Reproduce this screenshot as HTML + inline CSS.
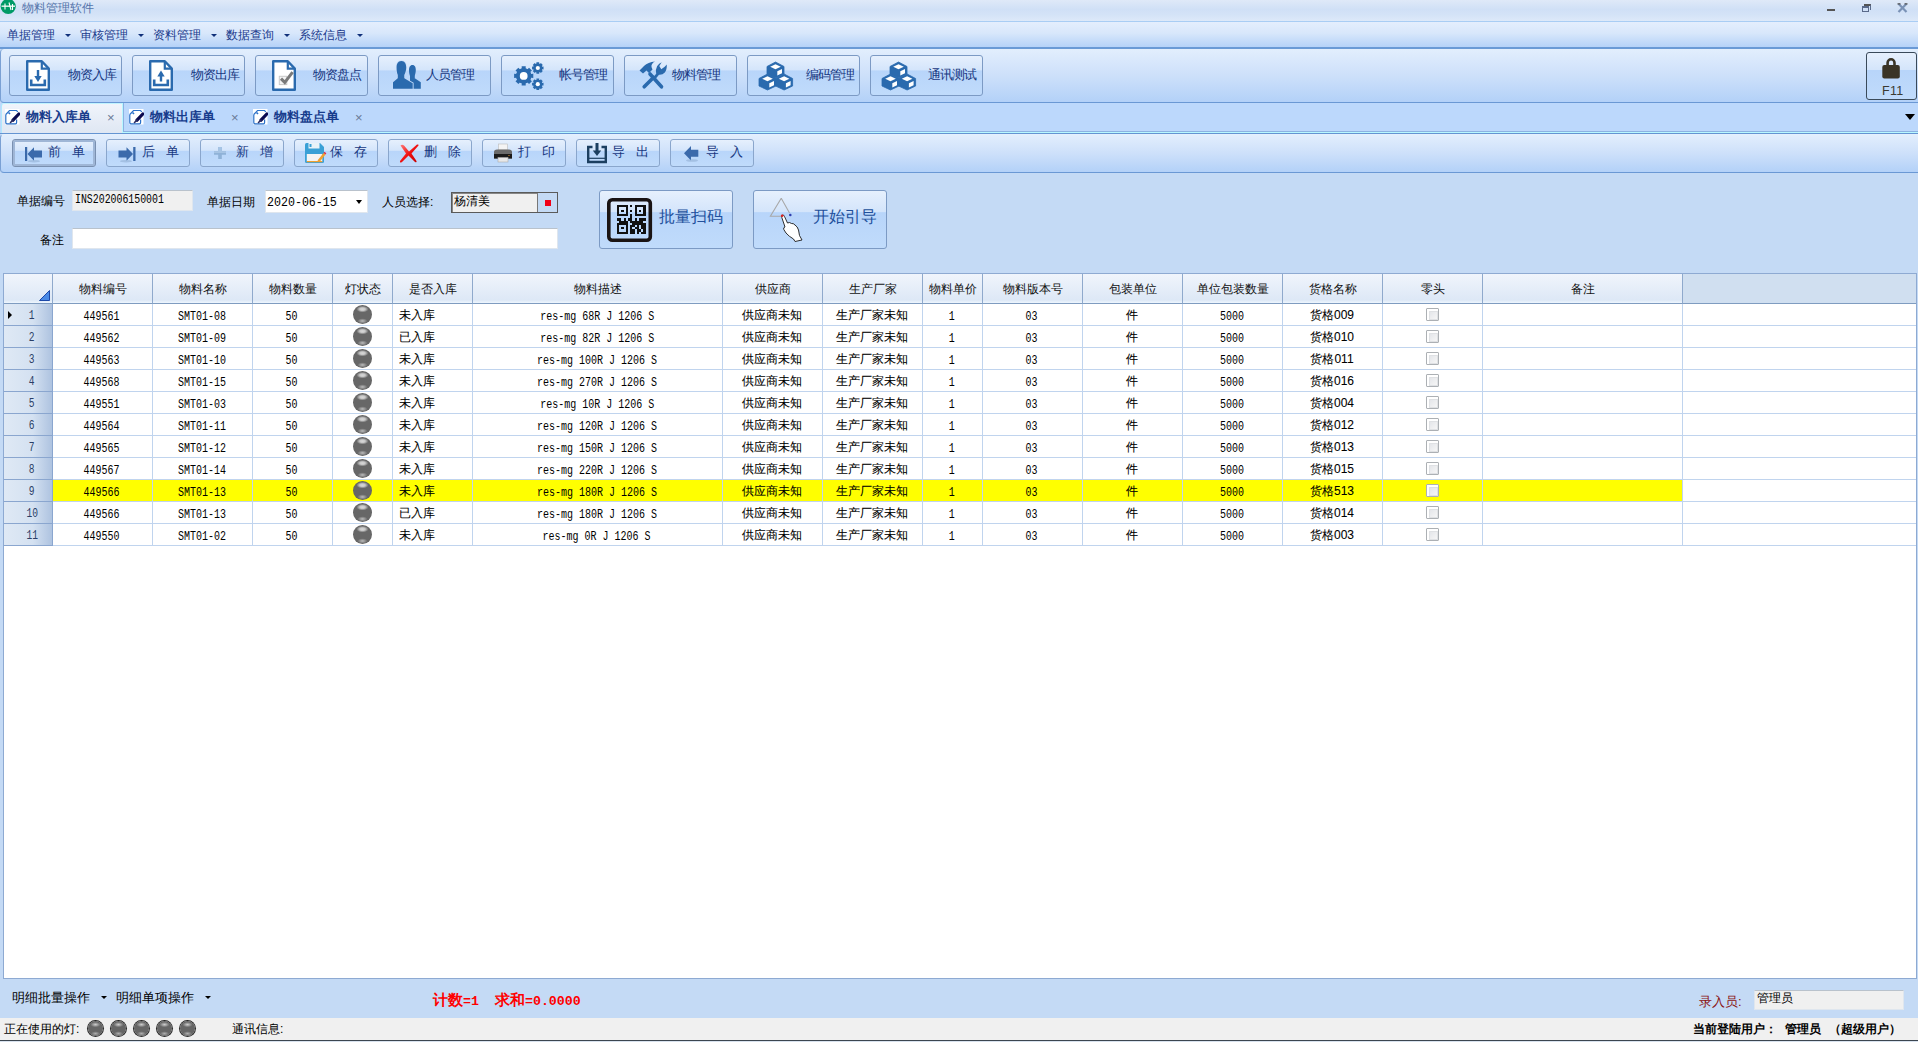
<!DOCTYPE html><html><head><meta charset="utf-8"><style>
*{margin:0;padding:0;box-sizing:border-box}
html,body{width:1918px;height:1042px;overflow:hidden;background:#c4daf5;font-family:"Liberation Sans", sans-serif;font-size:12px;color:#000}
.a{position:absolute}
.t{position:absolute;white-space:nowrap;line-height:12px}
#title{left:0;top:0;width:1918px;height:22px;background:linear-gradient(#dfe9f8,#d0e0f6 45%,#d4e3f7 70%,#dde9f9);border-bottom:1px solid #a9cdf4}
#menu{left:0;top:22px;width:1918px;height:27px;background:linear-gradient(#e4eefd,#d8e7fb 45%,#b5d2f8);border-bottom:2px solid #6a9ad6}
#tb1{left:0;top:49px;width:1918px;height:54px;background:linear-gradient(#e2eefd,#cde0fa 50%,#b3d1f8);border-bottom:1px solid #6a98d4;border-left:1px solid #7aa0d4;border-radius:4px 0 0 4px}
.b1{position:absolute;top:6px;width:113px;height:41px;border:1px solid #7c9ac4;border-radius:3px;background:linear-gradient(#e6f0fd,#d4e5fb 36%,#b8d5fa 38%,#c0dbfb)}
.b1 .t{left:59px;top:13px;color:#17377f;font-size:12px}
#tabs{left:0;top:103px;width:1918px;height:31px;background:#bcd8fc;border-bottom:1px solid #6494d2}
#tb2{left:0;top:134px;width:1918px;height:39px;background:linear-gradient(#e2eefd,#cde0fa 50%,#b3d1f8);border-bottom:1px solid #6a98d4;border-left:1px solid #7aa0d4;border-top:1px solid #e4f0fe;border-radius:4px 0 0 4px}
.b2{position:absolute;top:4px;width:84px;height:28px;border:1px solid #8aa6cc;border-radius:3px;background:linear-gradient(#e6f0fd,#d4e5fb 40%,#b8d5fa 42%,#c0dbfb)}
.b2 .t{color:#17377f;font-size:12px;top:7px}
.inp{position:absolute;background:#f0f0f0;border:1px solid #dfe6ee;border-top-color:#b9c2cc}
.bigb{position:absolute;top:190px;width:134px;height:59px;border:1px solid #7c9ac4;border-radius:3px;background:linear-gradient(#e6f0fd,#d4e5fb 36%,#b8d5fa 38%,#c0dbfb)}
#grid{left:3px;top:273px;width:1914px;height:706px;background:#fff;border:1px solid #8eaad2}
.hc{position:absolute;top:0;height:30px;background:linear-gradient(#f0f5fc,#dde8f6 90%,#eef6fe);border-right:1px solid #8fa9cc;border-bottom:1px solid #7f9cc0;text-align:center}
.hc span{position:absolute;left:0;right:0;top:9px;line-height:12px;color:#111}
.rh{position:absolute;left:0;width:49px;height:22px;background:linear-gradient(90deg,#dfe9f5,#d4e1f1 60%,#aec3e0);border-right:1px solid #8aa6cf;border-bottom:1px solid #8aa6cf}
.rh span{position:absolute;left:0;width:56px;text-align:center;top:7px;line-height:10px;font-family:'Liberation Mono', monospace;font-size:12px;color:#2a3e66}
.rh span i{font-style:normal;display:inline-block;transform:scaleX(0.8)}
.hl{position:absolute;height:1px;background:#c0d4ee}
.vl{position:absolute;width:1px;background:#c0d4ee}
.c{position:absolute;height:12px;line-height:12px;text-align:center;white-space:nowrap;-webkit-text-stroke:0.08px #000}
.c.m{-webkit-text-stroke:0}
.m{font-family:'Liberation Mono', monospace;font-size:12.5px}
.m i{font-style:normal;display:inline-block;transform:scaleX(0.8)}
.sph{position:absolute;width:19px;height:19px;border-radius:50%;background:radial-gradient(6px 3.2px at 50% 22%,#dadada,#c8c8c8 45%,rgba(150,150,150,0)),radial-gradient(5px 2.6px at 50% 84%,#bdbdbd,rgba(170,170,170,0)),radial-gradient(circle at 50% 50%,#676767 62%,#5a5a5a 85%,#444 100%)}
.cb{position:absolute;width:13px;height:13px;border:1px solid #acb0b4;border-radius:1px;background:#fff}
.cb::after{content:'';position:absolute;left:2px;top:2px;width:9px;height:9px;box-sizing:border-box;border:1px solid #dfe1e4;background:linear-gradient(135deg,#e4e6ea,#f6f6f6)}
#bottom{left:0;top:979px;width:1918px;height:39px;background:#c4daf5}
#status{left:0;top:1018px;width:1918px;height:24px;background:#f0f0f0;border-bottom:1px solid #d8e2ee}
#sline{left:0;top:1040px;width:1918px;height:1px;background:#3c4650}
.lamp{position:absolute;top:3px;width:15px;height:15px;border-radius:50%;background:radial-gradient(5px 2.6px at 50% 24%,#cfcfcf,rgba(160,160,160,0)),radial-gradient(4.5px 2.3px at 50% 84%,#b0b0b0,rgba(160,160,160,0)),radial-gradient(circle,#666 60%,#555 85%,#333);box-shadow:0 0 0 1px #2a2a2a}
</style></head><body><div id="title" class="a">
<svg class="a" style="left:0;top:-1px" width="17" height="17" viewBox="0 0 17 17"><circle cx="8.2" cy="7.5" r="7.6" fill="#009a66"/><path d="M1.5 7.2 H15" stroke="#e8f4ee" stroke-width="1.4"/><path d="M5 4.5 V10.5 M9 3.5 L11 11 M12.5 5 V11" stroke="#fff" stroke-width="1.1"/></svg>
<div class="t" style="left:22px;top:2px;color:#5574aa;font-size:12px;line-height:12px">物料管理软件</div>
<div class="a" style="left:1827px;top:9px;width:8px;height:2px;background:#555"></div>
<div class="a" style="left:1862px;top:6px;width:7px;height:6px;border:1px solid #5a6a8a;border-top-width:2px"></div><div class="a" style="left:1864px;top:4px;width:7px;height:6px;border-top:2px solid #555;border-right:1px solid #5a6a8a"></div>
<svg class="a" style="left:1897px;top:3px" width="11" height="10" viewBox="0 0 11 10"><path d="M1.5 0.8 L9.5 9 M9.5 0.8 L1.5 9" stroke="#7a92b6" stroke-width="2.2"/><path d="M0.5 0.8 H3.5 M7.5 0.8 H10.5" stroke="#555" stroke-width="1.2"/></svg>
</div>
<div id="menu" class="a">
<div class="t" style="left:7px;top:7px;color:#1a3a8c">单据管理</div>
<div class="a" style="left:65px;top:12px;width:0;height:0;border-left:3px solid transparent;border-right:3px solid transparent;border-top:3px solid #10307a"></div>
<div class="t" style="left:80px;top:7px;color:#1a3a8c">审核管理</div>
<div class="a" style="left:138px;top:12px;width:0;height:0;border-left:3px solid transparent;border-right:3px solid transparent;border-top:3px solid #10307a"></div>
<div class="t" style="left:153px;top:7px;color:#1a3a8c">资料管理</div>
<div class="a" style="left:211px;top:12px;width:0;height:0;border-left:3px solid transparent;border-right:3px solid transparent;border-top:3px solid #10307a"></div>
<div class="t" style="left:226px;top:7px;color:#1a3a8c">数据查询</div>
<div class="a" style="left:284px;top:12px;width:0;height:0;border-left:3px solid transparent;border-right:3px solid transparent;border-top:3px solid #10307a"></div>
<div class="t" style="left:299px;top:7px;color:#1a3a8c">系统信息</div>
<div class="a" style="left:357px;top:12px;width:0;height:0;border-left:3px solid transparent;border-right:3px solid transparent;border-top:3px solid #10307a"></div>
</div>
<div id="tb1" class="a">
<div class="b1" style="left:8px"><svg class="a" style="left:16px;top:4px;overflow:visible" width="24" height="31" viewBox="0 0 24 31"><path d="M1.2 1.2 H15.8 L22.8 8.6 V29.8 H1.2 Z" fill="#fff" stroke="#2a6aae" stroke-width="2.4" stroke-linejoin="round"/><path d="M15.8 1.2 V8.6 H22.8" fill="none" stroke="#2a6aae" stroke-width="2.2"/><path d="M5.2 19.5 V25 H18.8 V19.5" fill="none" stroke="#2a6aae" stroke-width="2.6"/><path d="M12 10 V18" stroke="#2a6aae" stroke-width="2.4"/><path d="M8.3 16 L12 22 L15.7 16 Z" fill="#2a6aae"/></svg><div class="t" style="left:58px;top:12px;font-size:13px;letter-spacing:-1px;line-height:14px">物资入库</div></div>
<div class="b1" style="left:131px"><svg class="a" style="left:16px;top:4px;overflow:visible" width="24" height="31" viewBox="0 0 24 31"><path d="M1.2 1.2 H15.8 L22.8 8.6 V29.8 H1.2 Z" fill="#fff" stroke="#2a6aae" stroke-width="2.4" stroke-linejoin="round"/><path d="M15.8 1.2 V8.6 H22.8" fill="none" stroke="#2a6aae" stroke-width="2.2"/><path d="M5.2 19.5 V25 H18.8 V19.5" fill="none" stroke="#2a6aae" stroke-width="2.6"/><path d="M12 15 V21.5" stroke="#2a6aae" stroke-width="2.4"/><path d="M8.3 16.5 L12 10.5 L15.7 16.5 Z" fill="#2a6aae"/></svg><div class="t" style="left:58px;top:12px;font-size:13px;letter-spacing:-1px;line-height:14px">物资出库</div></div>
<div class="b1" style="left:254px"><svg class="a" style="left:16px;top:4px;overflow:visible" width="24" height="31" viewBox="0 0 24 31"><path d="M1.2 1.2 H15.8 L22.8 8.6 V29.8 H1.2 Z" fill="#fff" stroke="#2a6aae" stroke-width="2.4" stroke-linejoin="round"/><path d="M15.8 1.2 V8.6 H22.8" fill="none" stroke="#2a6aae" stroke-width="2.2"/><rect x="7.3" y="16.3" width="7.5" height="8.3" fill="#f4f4f4" stroke="#c8c8c8" stroke-width="1"/><path d="M9 18.6 L12.8 22.4 L20.6 12.2" fill="none" stroke="#7a7a7a" stroke-width="3"/></svg><div class="t" style="left:57px;top:12px;font-size:13px;letter-spacing:-1px;line-height:14px">物资盘点</div></div>
<div class="b1" style="left:377px"><svg class="a" style="left:14px;top:5px;overflow:visible" width="28" height="28" viewBox="0 0 28 28"><path d="M19.4 4 C22 4 22.8 6.5 22.8 9 C22.8 12 22 13.5 21.8 15 V18 H17 V15 C16.5 13.5 16 12 16 9 C16 6.5 17 4 19.4 4 Z" fill="#2a6aae"/><path d="M17 17.5 H22.2 L27.8 21.3 V27.7 H17 Z" fill="#2a6aae"/><path d="M4.8 17.3 L0 21.3 V27.7 H19.7 V22.3 L11.3 17.3 Z" fill="#2a6aae" stroke="#c2dafa" stroke-width="1.8"/><path d="M8.4 0 C12 0 13.2 3 13.2 6.5 C13.2 10 12.2 12 11.3 14 L11.3 18 L4.8 18 L4.8 14 C4 12 3.6 10 3.6 6.5 C3.6 3 4.8 0 8.4 0 Z" fill="#2a6aae" stroke="#c8defa" stroke-width="1.4"/><path d="M4.8 17.3 L0 21.3 V27.7 H19.7 V22.3 L11.3 17.3 Z" fill="#2a6aae"/><path d="M8.4 0 C12 0 13.2 3 13.2 6.5 C13.2 10 12.2 12 11.3 14 L11.3 18 L4.8 18 L4.8 14 C4 12 3.6 10 3.6 6.5 C3.6 3 4.8 0 8.4 0 Z" fill="#2a6aae"/></svg><div class="t" style="left:47px;top:12px;font-size:13px;letter-spacing:-1px;line-height:14px">人员管理</div></div>
<div class="b1" style="left:500px"><svg class="a" style="left:12px;top:6px;overflow:visible" width="31" height="29" viewBox="0 0 31 29"><path d="M17.04 11.94 L19.28 11.86 L19.28 15.94 L17.04 15.86 L16.28 17.71 L17.92 19.23 L15.03 22.12 L13.51 20.48 L11.66 21.24 L11.74 23.48 L7.66 23.48 L7.74 21.24 L5.89 20.48 L4.37 22.12 L1.48 19.23 L3.12 17.71 L2.36 15.86 L0.12 15.94 L0.12 11.86 L2.36 11.94 L3.12 10.09 L1.48 8.57 L4.37 5.68 L5.89 7.32 L7.74 6.56 L7.66 4.32 L11.74 4.32 L11.66 6.56 L13.51 7.32 L15.03 5.68 L17.92 8.57 L16.28 10.09Z" fill="#2a6aae"/><circle cx="9.7" cy="13.9" r="7.6" fill="#2a6aae"/><circle cx="9.7" cy="13.9" r="3.9" fill="#fff"/><path d="M28.10 4.68 L29.53 4.60 L29.53 7.40 L28.10 7.32 L27.78 8.11 L28.84 9.06 L26.86 11.04 L25.91 9.98 L25.12 10.30 L25.20 11.73 L22.40 11.73 L22.48 10.30 L21.69 9.98 L20.74 11.04 L18.76 9.06 L19.82 8.11 L19.50 7.32 L18.07 7.40 L18.07 4.60 L19.50 4.68 L19.82 3.89 L18.76 2.94 L20.74 0.96 L21.69 2.02 L22.48 1.70 L22.40 0.27 L25.20 0.27 L25.12 1.70 L25.91 2.02 L26.86 0.96 L28.84 2.94 L27.78 3.89Z" fill="#2a6aae"/><circle cx="23.8" cy="6" r="4.5" fill="#2a6aae"/><circle cx="23.8" cy="6" r="2.1" fill="#fff"/><path d="M28.10 20.88 L29.53 20.80 L29.53 23.60 L28.10 23.52 L27.78 24.31 L28.84 25.26 L26.86 27.24 L25.91 26.18 L25.12 26.50 L25.20 27.93 L22.40 27.93 L22.48 26.50 L21.69 26.18 L20.74 27.24 L18.76 25.26 L19.82 24.31 L19.50 23.52 L18.07 23.60 L18.07 20.80 L19.50 20.88 L19.82 20.09 L18.76 19.14 L20.74 17.16 L21.69 18.22 L22.48 17.90 L22.40 16.47 L25.20 16.47 L25.12 17.90 L25.91 18.22 L26.86 17.16 L28.84 19.14 L27.78 20.09Z" fill="#2a6aae"/><circle cx="23.8" cy="22.2" r="4.5" fill="#2a6aae"/><circle cx="23.8" cy="22.2" r="2.1" fill="#fff"/></svg><div class="t" style="left:57px;top:12px;font-size:13px;letter-spacing:-1px;line-height:14px">帐号管理</div></div>
<div class="b1" style="left:623px"><svg class="a" style="left:14px;top:5px;overflow:visible" width="28" height="28" viewBox="0 0 28 28"><path d="M11 13 L22.5 25.8" stroke="#2a6aae" stroke-width="3.6" stroke-linecap="round"/><path d="M0.5 9.5 L5 5 Q9 1 16 0.5 Q12 2.5 12.5 6 L13.5 8.5 L10 12 L7.5 9.5 L4 12.5 Z" fill="#2a6aae"/><path d="M5.2 25.8 L14.5 16.5" stroke="#2a6aae" stroke-width="3.6" stroke-linecap="round"/><path d="M13.5 17 L17.2 12.8 Q16.3 8.2 18.2 5 Q20 2.3 22.7 1.3 L20.3 5 L22.3 8.2 L25.7 5.8 L27.8 3.5 Q28 9 25.8 11.5 Q23.5 14 20 13.7 L16.5 18 Z" fill="#2a6aae"/></svg><div class="t" style="left:47px;top:12px;font-size:13px;letter-spacing:-1px;line-height:14px">物料管理</div></div>
<div class="b1" style="left:746px"><svg class="a" style="left:11px;top:6px;overflow:visible" width="34" height="28" viewBox="0 0 34 28"><path d="M16.5 0 L25 4.5 V12 L16.5 16 L8 12 V4.5 Z" fill="#2a6aae" stroke="#2a6aae" stroke-width="0.8" stroke-linejoin="round"/><path d="M16.5 2.3 L21.8 4.8 L16.5 7.3 L11.2 4.8 Z" fill="#fff"/><path d="M18.3 9.3 L23 6.9 V11.2 L18.3 13.6 Z" fill="#fff"/><path d="M8.5 12 L17 16.5 V24 L8.5 28 L0 24 V16.5 Z" fill="#2a6aae" stroke="#2a6aae" stroke-width="0.8" stroke-linejoin="round"/><path d="M8.5 14.3 L13.8 16.8 L8.5 19.3 L3.2 16.8 Z" fill="#fff"/><path d="M10.3 21.3 L15 18.9 V23.2 L10.3 25.6 Z" fill="#fff"/><path d="M25.1 12 L33.6 16.5 V24 L25.1 28 L16.6 24 V16.5 Z" fill="#2a6aae" stroke="#2a6aae" stroke-width="0.8" stroke-linejoin="round"/><path d="M25.1 14.3 L30.400000000000002 16.8 L25.1 19.3 L19.8 16.8 Z" fill="#fff"/><path d="M26.900000000000002 21.3 L31.6 18.9 V23.2 L26.900000000000002 25.6 Z" fill="#fff"/></svg><div class="t" style="left:58px;top:12px;font-size:13px;letter-spacing:-1px;line-height:14px">编码管理</div></div>
<div class="b1" style="left:869px"><svg class="a" style="left:11px;top:6px;overflow:visible" width="34" height="28" viewBox="0 0 34 28"><path d="M16.5 0 L25 4.5 V12 L16.5 16 L8 12 V4.5 Z" fill="#2a6aae" stroke="#2a6aae" stroke-width="0.8" stroke-linejoin="round"/><path d="M16.5 2.3 L21.8 4.8 L16.5 7.3 L11.2 4.8 Z" fill="#fff"/><path d="M18.3 9.3 L23 6.9 V11.2 L18.3 13.6 Z" fill="#fff"/><path d="M8.5 12 L17 16.5 V24 L8.5 28 L0 24 V16.5 Z" fill="#2a6aae" stroke="#2a6aae" stroke-width="0.8" stroke-linejoin="round"/><path d="M8.5 14.3 L13.8 16.8 L8.5 19.3 L3.2 16.8 Z" fill="#fff"/><path d="M10.3 21.3 L15 18.9 V23.2 L10.3 25.6 Z" fill="#fff"/><path d="M25.1 12 L33.6 16.5 V24 L25.1 28 L16.6 24 V16.5 Z" fill="#2a6aae" stroke="#2a6aae" stroke-width="0.8" stroke-linejoin="round"/><path d="M25.1 14.3 L30.400000000000002 16.8 L25.1 19.3 L19.8 16.8 Z" fill="#fff"/><path d="M26.900000000000002 21.3 L31.6 18.9 V23.2 L26.900000000000002 25.6 Z" fill="#fff"/></svg><div class="t" style="left:57px;top:12px;font-size:13px;letter-spacing:-1px;line-height:14px">通讯测试</div></div>
<div class="a" style="left:1865px;top:3px;width:51px;height:48px;border:1px solid #3a4a5a;border-radius:3px;background:linear-gradient(#e6f0fd,#d4e5fb 36%,#b8d5fa 38%,#c0dbfb)"></div>
<svg class="a" style="left:1881px;top:8px" width="18" height="22" viewBox="0 0 18 22"><path d="M5.6 9 V5.75 A3.45 3.45 0 0 1 12.5 5.75 V9" fill="none" stroke="#3a3426" stroke-width="2.6"/><rect x="0.3" y="8" width="17.5" height="13.6" rx="2" fill="#3a3426"/></svg>
<div class="t" style="left:1881px;top:36px;font-size:12.5px;color:#3a3a32;letter-spacing:0.3px;line-height:12px">F11</div>
</div>
<div id="tabs" class="a">
<div class="a" style="left:122px;top:0;width:1px;height:30px;background:#b8f8ff"></div><div class="a" style="left:123px;top:0;width:1px;height:29px;background:#8cb2e2"></div>
<div class="a" style="left:122px;top:29px;width:1796px;height:1px;background:#b8f8ff"></div><div class="a" style="left:123px;top:28px;width:1795px;height:1px;background:#8cb2e2"></div>
<div class="a" style="left:1px;top:0;width:121px;height:30px;background:linear-gradient(#f0f4fb,#dfe7f3);border-top:1px solid #c0f4ff;border-left:1px solid #b0e8fc;border-radius:3px 0 0 0"></div>
<svg class="a" style="left:4px;top:5px" width="16" height="17" viewBox="0 0 16 17"><rect x="1" y="1" width="14.5" height="15.5" fill="#fff"/><path d="M1.8 6.5 L5.5 2.5 H12.5 L13.8 3.8 M1.8 6.5 V14.5 Q1.8 15.8 3 15.8 H11.5 Q12.6 15.8 12.6 14.5 V11.5" fill="none" stroke="#2a70c8" stroke-width="1.2"/><path d="M4.5 4.5 L6 6" stroke="#2a70c8" stroke-width="1.6"/><path d="M9 12.2 L14.8 6" stroke="#0a0a50" stroke-width="3.2" stroke-linecap="round"/><path d="M6.5 14.5 L9 12" stroke="#2a2a60" stroke-width="1.6" stroke-linecap="round"/></svg>
<div class="t" style="left:26px;top:8px;font-weight:bold;color:#173c8c;font-size:12.5px">物料入库单</div>
<div class="t" style="left:107px;top:9px;color:#6a7a96;font-size:13px">×</div>
<svg class="a" style="left:128px;top:5px" width="16" height="17" viewBox="0 0 16 17"><rect x="1" y="1" width="14.5" height="15.5" fill="#fff"/><path d="M1.8 6.5 L5.5 2.5 H12.5 L13.8 3.8 M1.8 6.5 V14.5 Q1.8 15.8 3 15.8 H11.5 Q12.6 15.8 12.6 14.5 V11.5" fill="none" stroke="#2a70c8" stroke-width="1.2"/><path d="M4.5 4.5 L6 6" stroke="#2a70c8" stroke-width="1.6"/><path d="M9 12.2 L14.8 6" stroke="#0a0a50" stroke-width="3.2" stroke-linecap="round"/><path d="M6.5 14.5 L9 12" stroke="#2a2a60" stroke-width="1.6" stroke-linecap="round"/></svg>
<div class="t" style="left:150px;top:8px;font-weight:bold;color:#173c8c;font-size:12.5px">物料出库单</div>
<div class="t" style="left:231px;top:9px;color:#6a7a96;font-size:13px">×</div>
<svg class="a" style="left:252px;top:5px" width="16" height="17" viewBox="0 0 16 17"><rect x="1" y="1" width="14.5" height="15.5" fill="#fff"/><path d="M1.8 6.5 L5.5 2.5 H12.5 L13.8 3.8 M1.8 6.5 V14.5 Q1.8 15.8 3 15.8 H11.5 Q12.6 15.8 12.6 14.5 V11.5" fill="none" stroke="#2a70c8" stroke-width="1.2"/><path d="M4.5 4.5 L6 6" stroke="#2a70c8" stroke-width="1.6"/><path d="M9 12.2 L14.8 6" stroke="#0a0a50" stroke-width="3.2" stroke-linecap="round"/><path d="M6.5 14.5 L9 12" stroke="#2a2a60" stroke-width="1.6" stroke-linecap="round"/></svg>
<div class="t" style="left:274px;top:8px;font-weight:bold;color:#173c8c;font-size:12.5px">物料盘点单</div>
<div class="t" style="left:355px;top:9px;color:#6a7a96;font-size:13px">×</div>
<div class="a" style="left:1905px;top:11px;width:0;height:0;border-left:5px solid transparent;border-right:5px solid transparent;border-top:6px solid #000"></div>
</div>
<div id="tb2" class="a">
<div class="b2" style="left:11px;border-color:#7a90b0;box-shadow:inset 0 0 0 2px #9fb6d6;"><svg class="a" style="left:12px;top:7px;overflow:visible" width="18" height="16" viewBox="0 0 18 16"><rect x="0" y="0" width="2.2" height="14" fill="#3b6aab"/><path d="M2.5 7 L9 0.3 V3.5 H17 V10.5 H9 V13.8 Z" fill="#3b6aab"/><ellipse cx="9" cy="14.2" rx="6" ry="1.2" fill="#8aa8cc" opacity="0.5"/></svg><div class="t" style="left:35px;top:5px;font-size:13px;line-height:14px">前</div><div class="t" style="left:59px;top:5px;font-size:13px;line-height:14px">单</div></div>
<div class="b2" style="left:105px;"><svg class="a" style="left:11px;top:7px;overflow:visible" width="18" height="16" viewBox="0 0 18 16"><path d="M0.5 3.5 H8.5 V0.3 L15 7 L8.5 13.8 V10.5 H0.5 Z" fill="#3b6aab"/><rect x="15.2" y="0" width="2.3" height="14" fill="#3b6aab"/><ellipse cx="8" cy="14.2" rx="6" ry="1.2" fill="#8aa8cc" opacity="0.5"/></svg><div class="t" style="left:35px;top:5px;font-size:13px;line-height:14px">后</div><div class="t" style="left:59px;top:5px;font-size:13px;line-height:14px">单</div></div>
<div class="b2" style="left:199px;"><svg class="a" style="left:13px;top:7px;overflow:visible" width="12" height="12" viewBox="0 0 12 12"><path d="M4.2 0 H7.8 V4.2 H12 V7.8 H7.8 V12 H4.2 V7.8 H0 V4.2 H4.2 Z" fill="#8fb2d8"/><path d="M4.2 0 H7.8 V4.2 H12 V6 H0 V4.2 H4.2 Z" fill="#a6c4e4"/></svg><div class="t" style="left:35px;top:5px;font-size:13px;line-height:14px">新</div><div class="t" style="left:59px;top:5px;font-size:13px;line-height:14px">增</div></div>
<div class="b2" style="left:293px;"><svg class="a" style="left:10px;top:3px;overflow:visible" width="21" height="20" viewBox="0 0 21 20"><path d="M0 1.5 Q0 0 1.5 0 H15 L19 4 V18.5 Q19 20 17.5 20 H1.5 Q0 20 0 18.5 Z" fill="#3aa0d6"/><rect x="3.5" y="0" width="11" height="5.5" fill="#e8f2f8"/><rect x="4.5" y="1" width="2" height="3" fill="#3aa0d6"/><rect x="1.8" y="11" width="15.5" height="7.5" fill="#f4f4f4"/><rect x="1.8" y="18" width="15.5" height="1.2" fill="#f0a030"/><path d="M12.5 17.5 L18.5 10 L20.5 11.5 L14.5 19 Z" fill="#f0a030"/><path d="M18.5 10 L19.5 8.8 L21.3 10.3 L20.5 11.5Z" fill="#e03040"/></svg><div class="t" style="left:35px;top:5px;font-size:13px;line-height:14px">保</div><div class="t" style="left:59px;top:5px;font-size:13px;line-height:14px">存</div></div>
<div class="b2" style="left:387px;"><svg class="a" style="left:10px;top:4px;overflow:visible" width="20" height="19" viewBox="0 0 20 19"><defs><linearGradient id="rx" x1="0" y1="0" x2="1" y2="1"><stop offset="0" stop-color="#ff8080"/><stop offset="0.5" stop-color="#f01010"/><stop offset="1" stop-color="#c00000"/></linearGradient></defs><path d="M1.5 1.5 Q3 0 5 1.5 L10 7.5 L18 0.5 Q20 0 19.5 1.5 L12.5 9.5 L17.5 17 Q18 19 16 18 L9.5 11.5 L3 18 Q0.5 19.5 1 17 L7 9.5 Z" fill="url(#rx)"/></svg><div class="t" style="left:35px;top:5px;font-size:13px;line-height:14px">删</div><div class="t" style="left:59px;top:5px;font-size:13px;line-height:14px">除</div></div>
<div class="b2" style="left:481px;"><svg class="a" style="left:11px;top:4px;overflow:visible" width="18" height="18" viewBox="0 0 18 18"><rect x="4.5" y="0" width="9" height="6" fill="#f4f4f4" stroke="#bbb" stroke-width="0.6"/><path d="M0 8 Q0 5.5 3 5.5 H15 Q18 5.5 18 8 V14.5 H0 Z" fill="#6a6a6a"/><rect x="0" y="10" width="18" height="4.5" fill="#1a1a1a"/><rect x="4" y="13.5" width="10" height="4.5" fill="#e8e8e8" stroke="#aaa" stroke-width="0.6"/><circle cx="15" cy="11.5" r="0.6" fill="#f0a030"/></svg><div class="t" style="left:35px;top:5px;font-size:13px;line-height:14px">打</div><div class="t" style="left:59px;top:5px;font-size:13px;line-height:14px">印</div></div>
<div class="b2" style="left:575px;"><svg class="a" style="left:10px;top:3px;overflow:visible" width="20" height="20" viewBox="0 0 20 20"><path d="M5.5 4 H1.2 V19 H18.8 V4 H14.5" fill="none" stroke="#1c3f60" stroke-width="2.4"/><path d="M1.5 15.3 H18.5" stroke="#1c3f60" stroke-width="1.2"/><path d="M10 0 V9" stroke="#1c3f60" stroke-width="3"/><path d="M5.8 7.5 L10 13 L14.2 7.5 Z" fill="#1c3f60"/></svg><div class="t" style="left:35px;top:5px;font-size:13px;line-height:14px">导</div><div class="t" style="left:59px;top:5px;font-size:13px;line-height:14px">出</div></div>
<div class="b2" style="left:669px;"><svg class="a" style="left:13px;top:6px;overflow:visible" width="16" height="16" viewBox="0 0 16 16"><path d="M0 7.3 L7 0 V3.8 H14.3 V10.8 H7 V14.5 Z" fill="#3b6aab"/><ellipse cx="8" cy="14.5" rx="6" ry="1.3" fill="#8aa8cc" opacity="0.5"/></svg><div class="t" style="left:35px;top:5px;font-size:13px;line-height:14px">导</div><div class="t" style="left:59px;top:5px;font-size:13px;line-height:14px">入</div></div>
</div>
<div class="t" style="left:17px;top:195px;">单据编号</div>
<div class="inp" style="left:72px;top:190px;width:121px;height:21px"></div>
<div class="t" style="left:75px;top:195px;font-family:'Liberation Mono', monospace;font-size:12.5px;transform:scaleX(0.79);transform-origin:0 0;line-height:10px">INS202006150001</div>
<div class="t" style="left:207px;top:196px;">单据日期</div>
<div class="inp" style="left:265px;top:190px;width:103px;height:23px;background:#fff"></div>
<div class="t" style="left:267px;top:198px;font-family:'Liberation Mono', monospace;font-size:12.5px;transform:scaleX(0.93);transform-origin:0 0;line-height:11px">2020-06-15</div>
<div class="a" style="left:356px;top:200px;width:0;height:0;border-left:3.5px solid transparent;border-right:3.5px solid transparent;border-top:4px solid #000"></div>
<div class="t" style="left:382px;top:196px;">人员选择:</div>
<div class="a" style="left:451px;top:192px;width:107px;height:21px;border:1px solid #5a5a5a;background:#c4daf5"></div>
<div class="a" style="left:452px;top:193px;width:86px;height:19px;background:#f0f0f0;border-right:1px solid #777;border-top:1px solid #888;border-left:1px solid #888"></div>
<div class="a" style="left:545px;top:200px;width:6px;height:6px;background:#f00018"></div>
<div class="t" style="left:454px;top:195px;">杨清美</div>
<div class="t" style="left:40px;top:234px;">备注</div>
<div class="inp" style="left:72px;top:228px;width:486px;height:21px;background:#fff"></div>
<div class="bigb" style="left:599px"><svg shape-rendering="crispEdges" class="a" style="left:7px;top:7px;overflow:visible" width="45" height="45" viewBox="0 0 45 45"><rect x="1.8" y="1.8" width="41.5" height="40.5" rx="3.5" fill="none" stroke="#1a1414" stroke-width="3.6" shape-rendering="geometricPrecision"/><rect x="10.00" y="7.20" width="2.25" height="2.25" fill="#111"/><rect x="12.20" y="7.20" width="2.25" height="2.25" fill="#111"/><rect x="14.40" y="7.20" width="2.25" height="2.25" fill="#111"/><rect x="16.60" y="7.20" width="2.25" height="2.25" fill="#111"/><rect x="18.80" y="7.20" width="2.25" height="2.25" fill="#111"/><rect x="23.20" y="7.20" width="2.25" height="2.25" fill="#111"/><rect x="27.60" y="7.20" width="2.25" height="2.25" fill="#111"/><rect x="29.80" y="7.20" width="2.25" height="2.25" fill="#111"/><rect x="32.00" y="7.20" width="2.25" height="2.25" fill="#111"/><rect x="34.20" y="7.20" width="2.25" height="2.25" fill="#111"/><rect x="36.40" y="7.20" width="2.25" height="2.25" fill="#111"/><rect x="10.00" y="9.40" width="2.25" height="2.25" fill="#111"/><rect x="18.80" y="9.40" width="2.25" height="2.25" fill="#111"/><rect x="27.60" y="9.40" width="2.25" height="2.25" fill="#111"/><rect x="36.40" y="9.40" width="2.25" height="2.25" fill="#111"/><rect x="10.00" y="11.60" width="2.25" height="2.25" fill="#111"/><rect x="14.40" y="11.60" width="2.25" height="2.25" fill="#111"/><rect x="18.80" y="11.60" width="2.25" height="2.25" fill="#111"/><rect x="23.20" y="11.60" width="2.25" height="2.25" fill="#111"/><rect x="27.60" y="11.60" width="2.25" height="2.25" fill="#111"/><rect x="32.00" y="11.60" width="2.25" height="2.25" fill="#111"/><rect x="36.40" y="11.60" width="2.25" height="2.25" fill="#111"/><rect x="10.00" y="13.80" width="2.25" height="2.25" fill="#111"/><rect x="18.80" y="13.80" width="2.25" height="2.25" fill="#111"/><rect x="27.60" y="13.80" width="2.25" height="2.25" fill="#111"/><rect x="36.40" y="13.80" width="2.25" height="2.25" fill="#111"/><rect x="10.00" y="16.00" width="2.25" height="2.25" fill="#111"/><rect x="12.20" y="16.00" width="2.25" height="2.25" fill="#111"/><rect x="14.40" y="16.00" width="2.25" height="2.25" fill="#111"/><rect x="16.60" y="16.00" width="2.25" height="2.25" fill="#111"/><rect x="18.80" y="16.00" width="2.25" height="2.25" fill="#111"/><rect x="23.20" y="16.00" width="2.25" height="2.25" fill="#111"/><rect x="27.60" y="16.00" width="2.25" height="2.25" fill="#111"/><rect x="29.80" y="16.00" width="2.25" height="2.25" fill="#111"/><rect x="32.00" y="16.00" width="2.25" height="2.25" fill="#111"/><rect x="34.20" y="16.00" width="2.25" height="2.25" fill="#111"/><rect x="36.40" y="16.00" width="2.25" height="2.25" fill="#111"/><rect x="23.20" y="18.20" width="2.25" height="2.25" fill="#111"/><rect x="10.00" y="20.40" width="2.25" height="2.25" fill="#111"/><rect x="12.20" y="20.40" width="2.25" height="2.25" fill="#111"/><rect x="16.60" y="20.40" width="2.25" height="2.25" fill="#111"/><rect x="21.00" y="20.40" width="2.25" height="2.25" fill="#111"/><rect x="23.20" y="20.40" width="2.25" height="2.25" fill="#111"/><rect x="27.60" y="20.40" width="2.25" height="2.25" fill="#111"/><rect x="32.00" y="20.40" width="2.25" height="2.25" fill="#111"/><rect x="34.20" y="20.40" width="2.25" height="2.25" fill="#111"/><rect x="36.40" y="20.40" width="2.25" height="2.25" fill="#111"/><rect x="12.20" y="22.60" width="2.25" height="2.25" fill="#111"/><rect x="14.40" y="22.60" width="2.25" height="2.25" fill="#111"/><rect x="16.60" y="22.60" width="2.25" height="2.25" fill="#111"/><rect x="18.80" y="22.60" width="2.25" height="2.25" fill="#111"/><rect x="23.20" y="22.60" width="2.25" height="2.25" fill="#111"/><rect x="25.40" y="22.60" width="2.25" height="2.25" fill="#111"/><rect x="27.60" y="22.60" width="2.25" height="2.25" fill="#111"/><rect x="29.80" y="22.60" width="2.25" height="2.25" fill="#111"/><rect x="32.00" y="22.60" width="2.25" height="2.25" fill="#111"/><rect x="34.20" y="22.60" width="2.25" height="2.25" fill="#111"/><rect x="10.00" y="24.80" width="2.25" height="2.25" fill="#111"/><rect x="12.20" y="24.80" width="2.25" height="2.25" fill="#111"/><rect x="14.40" y="24.80" width="2.25" height="2.25" fill="#111"/><rect x="16.60" y="24.80" width="2.25" height="2.25" fill="#111"/><rect x="18.80" y="24.80" width="2.25" height="2.25" fill="#111"/><rect x="25.40" y="24.80" width="2.25" height="2.25" fill="#111"/><rect x="27.60" y="24.80" width="2.25" height="2.25" fill="#111"/><rect x="29.80" y="24.80" width="2.25" height="2.25" fill="#111"/><rect x="32.00" y="24.80" width="2.25" height="2.25" fill="#111"/><rect x="34.20" y="24.80" width="2.25" height="2.25" fill="#111"/><rect x="36.40" y="24.80" width="2.25" height="2.25" fill="#111"/><rect x="10.00" y="27.00" width="2.25" height="2.25" fill="#111"/><rect x="18.80" y="27.00" width="2.25" height="2.25" fill="#111"/><rect x="23.20" y="27.00" width="2.25" height="2.25" fill="#111"/><rect x="25.40" y="27.00" width="2.25" height="2.25" fill="#111"/><rect x="29.80" y="27.00" width="2.25" height="2.25" fill="#111"/><rect x="34.20" y="27.00" width="2.25" height="2.25" fill="#111"/><rect x="36.40" y="27.00" width="2.25" height="2.25" fill="#111"/><rect x="10.00" y="29.20" width="2.25" height="2.25" fill="#111"/><rect x="14.40" y="29.20" width="2.25" height="2.25" fill="#111"/><rect x="18.80" y="29.20" width="2.25" height="2.25" fill="#111"/><rect x="23.20" y="29.20" width="2.25" height="2.25" fill="#111"/><rect x="27.60" y="29.20" width="2.25" height="2.25" fill="#111"/><rect x="29.80" y="29.20" width="2.25" height="2.25" fill="#111"/><rect x="34.20" y="29.20" width="2.25" height="2.25" fill="#111"/><rect x="36.40" y="29.20" width="2.25" height="2.25" fill="#111"/><rect x="10.00" y="31.40" width="2.25" height="2.25" fill="#111"/><rect x="18.80" y="31.40" width="2.25" height="2.25" fill="#111"/><rect x="23.20" y="31.40" width="2.25" height="2.25" fill="#111"/><rect x="25.40" y="31.40" width="2.25" height="2.25" fill="#111"/><rect x="29.80" y="31.40" width="2.25" height="2.25" fill="#111"/><rect x="32.00" y="31.40" width="2.25" height="2.25" fill="#111"/><rect x="36.40" y="31.40" width="2.25" height="2.25" fill="#111"/><rect x="10.00" y="33.60" width="2.25" height="2.25" fill="#111"/><rect x="12.20" y="33.60" width="2.25" height="2.25" fill="#111"/><rect x="14.40" y="33.60" width="2.25" height="2.25" fill="#111"/><rect x="16.60" y="33.60" width="2.25" height="2.25" fill="#111"/><rect x="18.80" y="33.60" width="2.25" height="2.25" fill="#111"/><rect x="23.20" y="33.60" width="2.25" height="2.25" fill="#111"/><rect x="25.40" y="33.60" width="2.25" height="2.25" fill="#111"/><rect x="29.80" y="33.60" width="2.25" height="2.25" fill="#111"/><rect x="34.20" y="33.60" width="2.25" height="2.25" fill="#111"/><rect x="36.40" y="33.60" width="2.25" height="2.25" fill="#111"/></svg><div class="t" style="left:59px;top:18px;font-size:16px;line-height:16px;color:#22509c">批量扫码</div></div>
<div class="bigb" style="left:753px"><svg class="a" style="left:0px;top:0px;overflow:visible" width="60" height="58" viewBox="0 0 60 58"><path d="M27.25 7.2 L16.4 25.2 L27.7 25.2 M27.25 7.2 L35.5 22" fill="none" stroke="#a8a8a8" stroke-width="1.1"/><circle cx="36.3" cy="24" r="1.3" fill="#3040b0"/><path d="M28.3 24 Q29.8 23.6 30.5 25.5 L33.5 32 Q35.5 30.8 37.5 32.5 Q39.5 32.2 41 34 Q43.5 35.5 44.5 39 L45.5 44.5 L48 49 L41 50.5 L39.5 48 Q35 45.5 32 42 L29.8 38.5 Q29 36.5 31 36 L27.8 26.5 Q27.3 24.6 28.3 24 Z" fill="#fff" stroke="#1a1a1a" stroke-width="0.9"/><circle cx="28.2" cy="24.8" r="1.3" fill="#e02020"/></svg><div class="t" style="left:59px;top:18px;font-size:16px;line-height:16px;color:#22509c">开始引导</div></div>
<div id="grid" class="a">
<div class="hc" style="left:0;width:49px;"></div>
<svg class="a" style="left:35px;top:16px" width="11" height="11" viewBox="0 0 11 11"><path d="M10.5 0.5 V10.5 H0.5z" fill="#4a8ae6" stroke="#1c48a8" stroke-width="1"/></svg>
<div class="hc" style="left:49px;width:100px"><span>物料编号</span></div>
<div class="hc" style="left:149px;width:100px"><span>物料名称</span></div>
<div class="hc" style="left:249px;width:80px"><span>物料数量</span></div>
<div class="hc" style="left:329px;width:60px"><span>灯状态</span></div>
<div class="hc" style="left:389px;width:80px"><span>是否入库</span></div>
<div class="hc" style="left:469px;width:250px"><span>物料描述</span></div>
<div class="hc" style="left:719px;width:100px"><span>供应商</span></div>
<div class="hc" style="left:819px;width:100px"><span>生产厂家</span></div>
<div class="hc" style="left:919px;width:60px"><span>物料单价</span></div>
<div class="hc" style="left:979px;width:100px"><span>物料版本号</span></div>
<div class="hc" style="left:1079px;width:100px"><span>包装单位</span></div>
<div class="hc" style="left:1179px;width:100px"><span>单位包装数量</span></div>
<div class="hc" style="left:1279px;width:100px"><span>货格名称</span></div>
<div class="hc" style="left:1379px;width:100px"><span>零头</span></div>
<div class="hc" style="left:1479px;width:200px"><span>备注</span></div>
<div class="a" style="left:1679px;top:0;width:233px;height:30px;background:#d0dff0;border-bottom:1px solid #7f9cc0"></div>
<div class="rh" style="top:30px"><span><i>1</i></span></div>
<div class="a" style="left:4px;top:37px;width:0;height:0;border-top:4px solid transparent;border-bottom:4px solid transparent;border-left:4px solid #000"></div>
<div class="hl" style="left:49px;top:51px;width:1863px"></div>
<div class="c m" style="left:48px;top:37px;width:100px"><i>449561</i></div>
<div class="c m" style="left:148px;top:37px;width:100px"><i>SMT01-08</i></div>
<div class="c m" style="left:248px;top:37px;width:80px"><i>50</i></div>
<div class="sph" style="left:349px;top:31px"></div>
<div class="c " style="left:395px;top:35px;text-align:left">未入库</div>
<div class="c m" style="left:468px;top:37px;width:250px"><i>res-mg 68R J 1206 S</i></div>
<div class="c " style="left:718px;top:35px;width:100px">供应商未知</div>
<div class="c " style="left:818px;top:35px;width:100px">生产厂家未知</div>
<div class="c m" style="left:918px;top:37px;width:60px"><i>1</i></div>
<div class="c m" style="left:978px;top:37px;width:100px"><i>03</i></div>
<div class="c " style="left:1078px;top:35px;width:100px">件</div>
<div class="c m" style="left:1178px;top:37px;width:100px"><i>5000</i></div>
<div class="c " style="left:1278px;top:35px;width:100px">货格009</div>
<div class="cb" style="left:1422px;top:34px"></div>
<div class="rh" style="top:52px"><span><i>2</i></span></div>
<div class="hl" style="left:49px;top:73px;width:1863px"></div>
<div class="c m" style="left:48px;top:59px;width:100px"><i>449562</i></div>
<div class="c m" style="left:148px;top:59px;width:100px"><i>SMT01-09</i></div>
<div class="c m" style="left:248px;top:59px;width:80px"><i>50</i></div>
<div class="sph" style="left:349px;top:53px"></div>
<div class="c " style="left:395px;top:57px;text-align:left">已入库</div>
<div class="c m" style="left:468px;top:59px;width:250px"><i>res-mg 82R J 1206 S</i></div>
<div class="c " style="left:718px;top:57px;width:100px">供应商未知</div>
<div class="c " style="left:818px;top:57px;width:100px">生产厂家未知</div>
<div class="c m" style="left:918px;top:59px;width:60px"><i>1</i></div>
<div class="c m" style="left:978px;top:59px;width:100px"><i>03</i></div>
<div class="c " style="left:1078px;top:57px;width:100px">件</div>
<div class="c m" style="left:1178px;top:59px;width:100px"><i>5000</i></div>
<div class="c " style="left:1278px;top:57px;width:100px">货格010</div>
<div class="cb" style="left:1422px;top:56px"></div>
<div class="rh" style="top:74px"><span><i>3</i></span></div>
<div class="hl" style="left:49px;top:95px;width:1863px"></div>
<div class="c m" style="left:48px;top:81px;width:100px"><i>449563</i></div>
<div class="c m" style="left:148px;top:81px;width:100px"><i>SMT01-10</i></div>
<div class="c m" style="left:248px;top:81px;width:80px"><i>50</i></div>
<div class="sph" style="left:349px;top:75px"></div>
<div class="c " style="left:395px;top:79px;text-align:left">未入库</div>
<div class="c m" style="left:468px;top:81px;width:250px"><i>res-mg 100R J 1206 S</i></div>
<div class="c " style="left:718px;top:79px;width:100px">供应商未知</div>
<div class="c " style="left:818px;top:79px;width:100px">生产厂家未知</div>
<div class="c m" style="left:918px;top:81px;width:60px"><i>1</i></div>
<div class="c m" style="left:978px;top:81px;width:100px"><i>03</i></div>
<div class="c " style="left:1078px;top:79px;width:100px">件</div>
<div class="c m" style="left:1178px;top:81px;width:100px"><i>5000</i></div>
<div class="c " style="left:1278px;top:79px;width:100px">货格011</div>
<div class="cb" style="left:1422px;top:78px"></div>
<div class="rh" style="top:96px"><span><i>4</i></span></div>
<div class="hl" style="left:49px;top:117px;width:1863px"></div>
<div class="c m" style="left:48px;top:103px;width:100px"><i>449568</i></div>
<div class="c m" style="left:148px;top:103px;width:100px"><i>SMT01-15</i></div>
<div class="c m" style="left:248px;top:103px;width:80px"><i>50</i></div>
<div class="sph" style="left:349px;top:97px"></div>
<div class="c " style="left:395px;top:101px;text-align:left">未入库</div>
<div class="c m" style="left:468px;top:103px;width:250px"><i>res-mg 270R J 1206 S</i></div>
<div class="c " style="left:718px;top:101px;width:100px">供应商未知</div>
<div class="c " style="left:818px;top:101px;width:100px">生产厂家未知</div>
<div class="c m" style="left:918px;top:103px;width:60px"><i>1</i></div>
<div class="c m" style="left:978px;top:103px;width:100px"><i>03</i></div>
<div class="c " style="left:1078px;top:101px;width:100px">件</div>
<div class="c m" style="left:1178px;top:103px;width:100px"><i>5000</i></div>
<div class="c " style="left:1278px;top:101px;width:100px">货格016</div>
<div class="cb" style="left:1422px;top:100px"></div>
<div class="rh" style="top:118px"><span><i>5</i></span></div>
<div class="hl" style="left:49px;top:139px;width:1863px"></div>
<div class="c m" style="left:48px;top:125px;width:100px"><i>449551</i></div>
<div class="c m" style="left:148px;top:125px;width:100px"><i>SMT01-03</i></div>
<div class="c m" style="left:248px;top:125px;width:80px"><i>50</i></div>
<div class="sph" style="left:349px;top:119px"></div>
<div class="c " style="left:395px;top:123px;text-align:left">未入库</div>
<div class="c m" style="left:468px;top:125px;width:250px"><i>res-mg 10R J 1206 S</i></div>
<div class="c " style="left:718px;top:123px;width:100px">供应商未知</div>
<div class="c " style="left:818px;top:123px;width:100px">生产厂家未知</div>
<div class="c m" style="left:918px;top:125px;width:60px"><i>1</i></div>
<div class="c m" style="left:978px;top:125px;width:100px"><i>03</i></div>
<div class="c " style="left:1078px;top:123px;width:100px">件</div>
<div class="c m" style="left:1178px;top:125px;width:100px"><i>5000</i></div>
<div class="c " style="left:1278px;top:123px;width:100px">货格004</div>
<div class="cb" style="left:1422px;top:122px"></div>
<div class="rh" style="top:140px"><span><i>6</i></span></div>
<div class="hl" style="left:49px;top:161px;width:1863px"></div>
<div class="c m" style="left:48px;top:147px;width:100px"><i>449564</i></div>
<div class="c m" style="left:148px;top:147px;width:100px"><i>SMT01-11</i></div>
<div class="c m" style="left:248px;top:147px;width:80px"><i>50</i></div>
<div class="sph" style="left:349px;top:141px"></div>
<div class="c " style="left:395px;top:145px;text-align:left">未入库</div>
<div class="c m" style="left:468px;top:147px;width:250px"><i>res-mg 120R J 1206 S</i></div>
<div class="c " style="left:718px;top:145px;width:100px">供应商未知</div>
<div class="c " style="left:818px;top:145px;width:100px">生产厂家未知</div>
<div class="c m" style="left:918px;top:147px;width:60px"><i>1</i></div>
<div class="c m" style="left:978px;top:147px;width:100px"><i>03</i></div>
<div class="c " style="left:1078px;top:145px;width:100px">件</div>
<div class="c m" style="left:1178px;top:147px;width:100px"><i>5000</i></div>
<div class="c " style="left:1278px;top:145px;width:100px">货格012</div>
<div class="cb" style="left:1422px;top:144px"></div>
<div class="rh" style="top:162px"><span><i>7</i></span></div>
<div class="hl" style="left:49px;top:183px;width:1863px"></div>
<div class="c m" style="left:48px;top:169px;width:100px"><i>449565</i></div>
<div class="c m" style="left:148px;top:169px;width:100px"><i>SMT01-12</i></div>
<div class="c m" style="left:248px;top:169px;width:80px"><i>50</i></div>
<div class="sph" style="left:349px;top:163px"></div>
<div class="c " style="left:395px;top:167px;text-align:left">未入库</div>
<div class="c m" style="left:468px;top:169px;width:250px"><i>res-mg 150R J 1206 S</i></div>
<div class="c " style="left:718px;top:167px;width:100px">供应商未知</div>
<div class="c " style="left:818px;top:167px;width:100px">生产厂家未知</div>
<div class="c m" style="left:918px;top:169px;width:60px"><i>1</i></div>
<div class="c m" style="left:978px;top:169px;width:100px"><i>03</i></div>
<div class="c " style="left:1078px;top:167px;width:100px">件</div>
<div class="c m" style="left:1178px;top:169px;width:100px"><i>5000</i></div>
<div class="c " style="left:1278px;top:167px;width:100px">货格013</div>
<div class="cb" style="left:1422px;top:166px"></div>
<div class="rh" style="top:184px"><span><i>8</i></span></div>
<div class="hl" style="left:49px;top:205px;width:1863px"></div>
<div class="c m" style="left:48px;top:191px;width:100px"><i>449567</i></div>
<div class="c m" style="left:148px;top:191px;width:100px"><i>SMT01-14</i></div>
<div class="c m" style="left:248px;top:191px;width:80px"><i>50</i></div>
<div class="sph" style="left:349px;top:185px"></div>
<div class="c " style="left:395px;top:189px;text-align:left">未入库</div>
<div class="c m" style="left:468px;top:191px;width:250px"><i>res-mg 220R J 1206 S</i></div>
<div class="c " style="left:718px;top:189px;width:100px">供应商未知</div>
<div class="c " style="left:818px;top:189px;width:100px">生产厂家未知</div>
<div class="c m" style="left:918px;top:191px;width:60px"><i>1</i></div>
<div class="c m" style="left:978px;top:191px;width:100px"><i>03</i></div>
<div class="c " style="left:1078px;top:189px;width:100px">件</div>
<div class="c m" style="left:1178px;top:191px;width:100px"><i>5000</i></div>
<div class="c " style="left:1278px;top:189px;width:100px">货格015</div>
<div class="cb" style="left:1422px;top:188px"></div>
<div class="a" style="left:49px;top:206px;width:1629px;height:21px;background:#ffff00"></div>
<div class="rh" style="top:206px"><span><i>9</i></span></div>
<div class="hl" style="left:49px;top:227px;width:1863px"></div>
<div class="c m" style="left:48px;top:213px;width:100px"><i>449566</i></div>
<div class="c m" style="left:148px;top:213px;width:100px"><i>SMT01-13</i></div>
<div class="c m" style="left:248px;top:213px;width:80px"><i>50</i></div>
<div class="sph" style="left:349px;top:207px"></div>
<div class="c " style="left:395px;top:211px;text-align:left">未入库</div>
<div class="c m" style="left:468px;top:213px;width:250px"><i>res-mg 180R J 1206 S</i></div>
<div class="c " style="left:718px;top:211px;width:100px">供应商未知</div>
<div class="c " style="left:818px;top:211px;width:100px">生产厂家未知</div>
<div class="c m" style="left:918px;top:213px;width:60px"><i>1</i></div>
<div class="c m" style="left:978px;top:213px;width:100px"><i>03</i></div>
<div class="c " style="left:1078px;top:211px;width:100px">件</div>
<div class="c m" style="left:1178px;top:213px;width:100px"><i>5000</i></div>
<div class="c " style="left:1278px;top:211px;width:100px">货格513</div>
<div class="cb" style="left:1422px;top:210px"></div>
<div class="rh" style="top:228px"><span><i>10</i></span></div>
<div class="hl" style="left:49px;top:249px;width:1863px"></div>
<div class="c m" style="left:48px;top:235px;width:100px"><i>449566</i></div>
<div class="c m" style="left:148px;top:235px;width:100px"><i>SMT01-13</i></div>
<div class="c m" style="left:248px;top:235px;width:80px"><i>50</i></div>
<div class="sph" style="left:349px;top:229px"></div>
<div class="c " style="left:395px;top:233px;text-align:left">已入库</div>
<div class="c m" style="left:468px;top:235px;width:250px"><i>res-mg 180R J 1206 S</i></div>
<div class="c " style="left:718px;top:233px;width:100px">供应商未知</div>
<div class="c " style="left:818px;top:233px;width:100px">生产厂家未知</div>
<div class="c m" style="left:918px;top:235px;width:60px"><i>1</i></div>
<div class="c m" style="left:978px;top:235px;width:100px"><i>03</i></div>
<div class="c " style="left:1078px;top:233px;width:100px">件</div>
<div class="c m" style="left:1178px;top:235px;width:100px"><i>5000</i></div>
<div class="c " style="left:1278px;top:233px;width:100px">货格014</div>
<div class="cb" style="left:1422px;top:232px"></div>
<div class="rh" style="top:250px"><span><i>11</i></span></div>
<div class="hl" style="left:49px;top:271px;width:1863px"></div>
<div class="c m" style="left:48px;top:257px;width:100px"><i>449550</i></div>
<div class="c m" style="left:148px;top:257px;width:100px"><i>SMT01-02</i></div>
<div class="c m" style="left:248px;top:257px;width:80px"><i>50</i></div>
<div class="sph" style="left:349px;top:251px"></div>
<div class="c " style="left:395px;top:255px;text-align:left">未入库</div>
<div class="c m" style="left:468px;top:257px;width:250px"><i>res-mg 0R J 1206 S</i></div>
<div class="c " style="left:718px;top:255px;width:100px">供应商未知</div>
<div class="c " style="left:818px;top:255px;width:100px">生产厂家未知</div>
<div class="c m" style="left:918px;top:257px;width:60px"><i>1</i></div>
<div class="c m" style="left:978px;top:257px;width:100px"><i>03</i></div>
<div class="c " style="left:1078px;top:255px;width:100px">件</div>
<div class="c m" style="left:1178px;top:257px;width:100px"><i>5000</i></div>
<div class="c " style="left:1278px;top:255px;width:100px">货格003</div>
<div class="cb" style="left:1422px;top:254px"></div>
<div class="vl" style="left:148px;top:30px;height:242px"></div>
<div class="vl" style="left:248px;top:30px;height:242px"></div>
<div class="vl" style="left:328px;top:30px;height:242px"></div>
<div class="vl" style="left:388px;top:30px;height:242px"></div>
<div class="vl" style="left:468px;top:30px;height:242px"></div>
<div class="vl" style="left:718px;top:30px;height:242px"></div>
<div class="vl" style="left:818px;top:30px;height:242px"></div>
<div class="vl" style="left:918px;top:30px;height:242px"></div>
<div class="vl" style="left:978px;top:30px;height:242px"></div>
<div class="vl" style="left:1078px;top:30px;height:242px"></div>
<div class="vl" style="left:1178px;top:30px;height:242px"></div>
<div class="vl" style="left:1278px;top:30px;height:242px"></div>
<div class="vl" style="left:1378px;top:30px;height:242px"></div>
<div class="vl" style="left:1478px;top:30px;height:242px"></div>
<div class="vl" style="left:1678px;top:30px;height:242px"></div>
</div>
<div id="bottom" class="a">
<div class="t" style="left:12px;top:12px;font-size:13px;line-height:14px">明细批量操作</div>
<div class="a" style="left:101px;top:17px;width:0;height:0;border-left:3px solid transparent;border-right:3px solid transparent;border-top:3px solid #000"></div>
<div class="t" style="left:116px;top:12px;font-size:13px;line-height:14px">明细单项操作</div>
<div class="a" style="left:205px;top:17px;width:0;height:0;border-left:3px solid transparent;border-right:3px solid transparent;border-top:3px solid #000"></div>
<div class="t" style="left:433px;top:13px;color:#f00;font-weight:bold;font-size:14.5px;line-height:16px">计数<span style="font-family:'Liberation Mono';font-size:13.3px">=1&nbsp;&nbsp;</span>求和<span style="font-family:'Liberation Mono';font-size:13.3px">=0.0000</span></div>
<div class="t" style="left:1699px;top:16px;color:#8a1212;font-size:13px;line-height:14px">录入员:</div>
<div class="inp" style="left:1754px;top:11px;width:150px;height:20px"></div>
<div class="t" style="left:1757px;top:13px;">管理员</div>
</div>
<div id="status" class="a">
<div class="t" style="left:4px;top:5px;">正在使用的灯:</div>
<div class="lamp" style="left:88px"></div>
<div class="lamp" style="left:111px"></div>
<div class="lamp" style="left:134px"></div>
<div class="lamp" style="left:157px"></div>
<div class="lamp" style="left:180px"></div>
<div class="t" style="left:232px;top:5px;">通讯信息:</div>
<div class="t" style="left:1693px;top:5px;font-weight:bold">当前登陆用户：</div>
<div class="t" style="left:1785px;top:5px;font-weight:bold">管理员</div>
<div class="t" style="left:1829px;top:5px;font-weight:bold">（超级用户）</div>
</div>
<div id="sline" class="a"></div></body></html>
